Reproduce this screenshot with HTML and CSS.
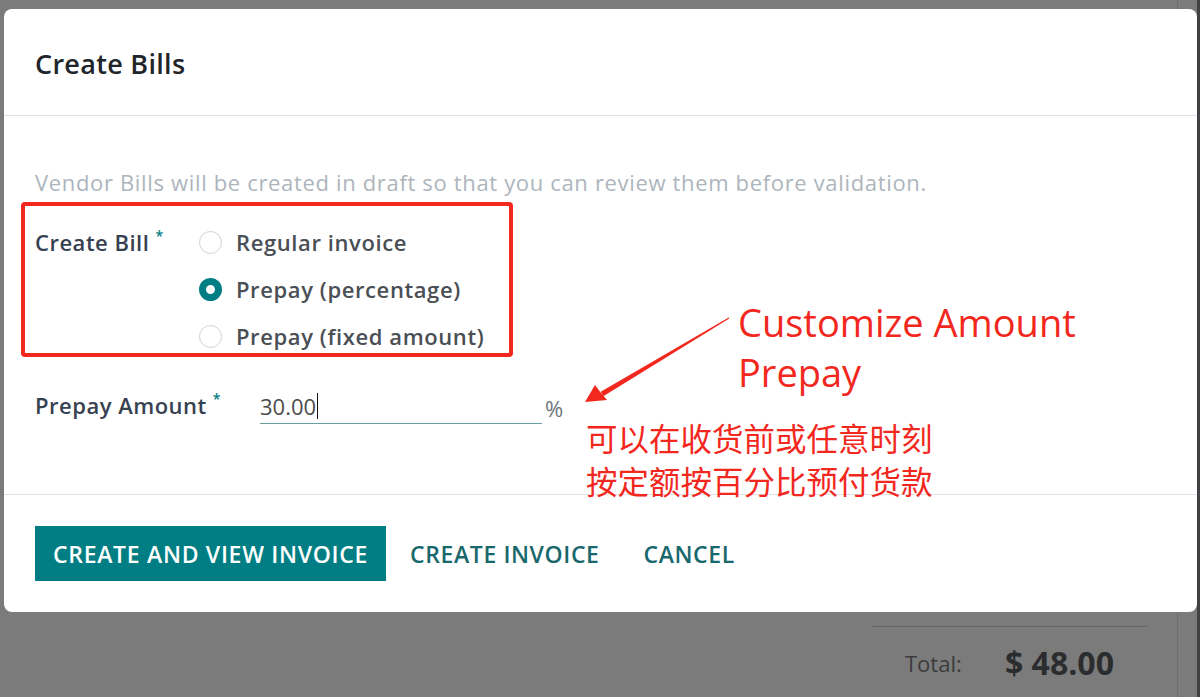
FILE: index.html
```html
<!DOCTYPE html>
<html lang="en">
  <head>
    <meta charset="UTF-8" />
    <meta name="viewport" content="width=device-width, initial-scale=1.0" />
    <title>Create Bills</title>
    <link rel="stylesheet" href="styles.css">
  </head>
  <body>
    <div class="screen">
      <div class="modal">
        <div class="modal-header">
          <h1>Create Bills</h1>
        </div>
        <div class="modal-body">
          <p class="hint">Vendor Bills will be created in draft so that you can review them before validation.</p>

          <div class="field field-radio">
            <label class="field-label">Create Bill<sup>*</sup></label>
            <div class="radio-list">
              <label class="radio"><span class="radio-dot"></span>Regular invoice</label>
              <label class="radio"><span class="radio-dot checked"></span>Prepay (percentage)</label>
              <label class="radio"><span class="radio-dot"></span>Prepay (fixed amount)</label>
            </div>
            <div class="mark-box"></div>
          </div>

          <div class="field field-amount">
            <label class="field-label">Prepay Amount<sup>*</sup></label>
            <div class="amount-input"><span>30.00</span><i class="caret"></i></div>
            <span class="unit">%</span>
          </div>
        </div>
        <div class="modal-footer">
          <button class="btn btn-primary">Create and View Invoice</button>
          <button class="btn btn-link">Create Invoice</button>
          <button class="btn btn-link">Cancel</button>
        </div>

        <div class="note">
          <svg class="note-arrow" width="155" height="100" viewBox="0 0 155 100">
            <polygon points="149.3,8.4 148.7,7.6 20.7,81.8 23.3,86.2" fill="#f2281e" />
            <polygon points="5,92 15,75 21,83 27,90" fill="#f2281e" />
          </svg>
          <p class="note-en">Customize Amount<br>Prepay</p>
          <p class="note-cn">可以在收货前或任意时刻<br>按定额按百分比预付货款</p>
        </div>
      </div>

      <div class="page-total">
        <span class="total-label">Total:</span>
        <span class="total-value">$ 48.00</span>
      </div>
    </div>
  </body>
</html>
```

FILE: styles.css
```css
body {
  margin: 0;
  font-family: "Open Sans", "Noto Sans", sans-serif;
  background-color: #7b7b7b;
}
.screen {
  width: 1200px;
  height: 697px;
  overflow: hidden;
  box-sizing: border-box;
  padding: 9px 3px 0 4px;
  border-right: 3px solid #3f4144;
  background: linear-gradient(to right, #7b7b7b 1177px, #6f6f6f 1177px, #6f6f6f 1178px, #7b7b7b 1178px);
}
.modal {
  position: relative;
  background-color: #ffffff;
  border-radius: 8px;
  width: 1193px;
  height: 603px;
  display: flex;
  flex-direction: column;
}
.modal-header {
  height: 106px;
  border-bottom: 1px solid #dee2e6;
  display: flex;
  align-items: center;
  padding: 0 31px;
}
h1 {
  margin: 3px 0 0;
  font-size: 27px;
  font-weight: 600;
  letter-spacing: 0.3px;
  color: #212529;
}
.modal-body {
  flex: 1;
  padding: 51px 31px 0 31px;
  border-bottom: 1px solid #dee2e6;
}
.hint {
  margin: 0;
  font-size: 22px;
  line-height: 30px;
  letter-spacing: 0.66px;
  color: #adb5bd;
}
.field {
  display: flex;
  font-size: 22px;
  color: #374151;
}
.field-label {
  font-weight: 600;
  color: #374151;
  line-height: 32px;
  letter-spacing: 0.5px;
}
sup {
  color: #017e84;
  font-size: 14px;
  margin-left: 6px;
  vertical-align: 10px;
  line-height: 0;
}
.field-radio {
  position: relative;
  padding-top: 29px;
}
.field-radio .field-label {
  width: 164px;
}
.radio-list {
  display: flex;
  flex-direction: column;
  gap: 15px;
}
.radio {
  display: flex;
  align-items: center;
  height: 32px;
  color: #4a4f55;
  font-weight: 600;
  letter-spacing: 0.6px;
}
.radio-dot {
  width: 23px;
  height: 23px;
  border: 1px solid #ced4da;
  border-radius: 50%;
  margin-right: 14px;
  box-sizing: border-box;
}
.radio-dot.checked {
  border: 7.5px solid #017e84;
}
.mark-box {
  position: absolute;
  left: -14px;
  top: 5px;
  width: 492px;
  height: 155px;
  box-sizing: border-box;
  border: 4px solid #f2281e;
  border-radius: 4px;
}
.field-amount {
  margin-top: 37px;
}
.field-amount .field-label {
  width: 225px;
}
.amount-input {
  width: 282px;
  height: 34px;
  border-bottom: 1.5px solid #6b9ea1;
  display: flex;
  align-items: center;
  color: #4c4c4c;
}
.caret {
  width: 1px;
  height: 26px;
  background-color: #111;
  margin-left: 1px;
}
.unit {
  margin-left: 3px;
  color: #6c757d;
  line-height: 34px;
  margin-top: 2px;
}
.modal-footer {
  height: 117px;
  display: flex;
  align-items: center;
  padding: 0 31px;
  gap: 2px;
}
.btn {
  font-family: inherit;
  font-size: 23px;
  font-weight: 600;
  letter-spacing: 0.6px;
  text-transform: uppercase;
  border: none;
  background: none;
  padding: 0 21px;
  cursor: pointer;
}
.btn-primary {
  height: 55px;
  padding: 0 18px;
  margin-right: 1px;
  letter-spacing: 0.7px;
  background-color: #017e84;
  color: #ffffff;
}
.btn-link {
  color: #19686c;
}
.note {
  position: absolute;
  left: 577px;
  top: 288px;
  color: #f2281e;
}
.note-arrow {
  position: absolute;
  left: -1px;
  top: 13px;
}
.note-en {
  margin: 0 0 0 157px;
  font-size: 38px;
  line-height: 50px;
}
.note-cn {
  margin: 19px 0 0 5px;
  font-family: "Noto Sans CJK SC", sans-serif;
  font-size: 31.5px;
  line-height: 43px;
}
.page-total {
  margin: 14px 0 0 868px;
  width: 275px;
  border-top: 1px solid #666;
  padding-top: 14px;
  display: flex;
  align-items: center;
  color: #3a3b3d;
}
.total-label {
  font-size: 22px;
  margin-left: 33px;
  width: 100px;
}
.total-value {
  font-size: 32px;
  font-weight: 700;
  color: #2b2c2e;
}
```
